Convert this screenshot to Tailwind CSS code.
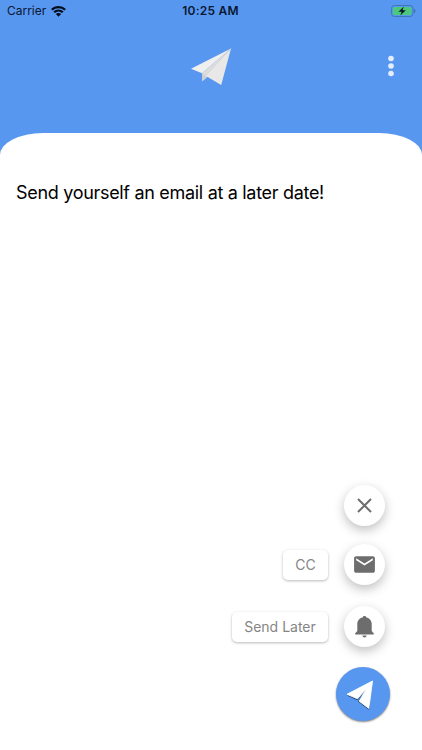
<!DOCTYPE html>
<html lang="en">
<head>
  <meta charset="UTF-8" />
  <title>Send Later</title>
  <meta name="viewport" content="width=device-width, initial-scale=1.0" />
  <script src="https://cdn.jsdelivr.net/npm/@tailwindcss/browser@4"></script>
</head>
<body class="bg-[#5897f0] font-['Inter',sans-serif] text-black">
  <div class="flex flex-col w-full h-screen overflow-hidden">

    <!-- Status bar -->
    <div class="grid grid-cols-3 items-center h-[22px] pl-[7px] pr-[6px] text-[#0a1730]">
      <div class="flex items-center gap-[5px]">
        <span class="text-[12px] leading-none tracking-[-0.02px]">Carrier</span>
        <svg class="w-[15px] h-[11px]" viewBox="0 0 15 11" fill="#040d1c">
          <path d="M7.5 0C4.6 0 2 1.1 0 3l1.6 1.600a8.400 8.400 0 0 1 11.800 0L15 3A10.800 10.800 0 0 0 7.500 0z" />
          <path d="M7.500 3.400c-2 0-3.800.8-5.100 2L4 7a5.200 5.200 0 0 1 7 0l1.600-1.600a7.400 7.400 0 0 0-5.100-2z" />
          <path d="M7.500 6.900c-1 0-1.900.4-2.600 1l2.600 2.800 2.600-2.800c-.7-.6-1.600-1-2.600-1z" />
        </svg>
      </div>
      <span class="text-center text-[12px] leading-none font-semibold tracking-[0.25px] whitespace-nowrap -ml-[2px]">10:25 AM</span>
      <svg class="justify-self-end w-[25px] h-[12px]" viewBox="0 0 25 12">
        <rect x="0.500" y="0.500" width="21.500" height="11" rx="3" fill="none" stroke="#3f76ba" />
        <rect x="2" y="2" width="18.500" height="8" rx="1.500" fill="#4cc87c" />
        <path d="M23.200 4v4c.8-.3 1.200-1.100 1.200-2s-.4-1.700-1.200-2z" fill="#3768a5" />
        <path d="M12.800 1.500 7.500 6.700h3.200L9.300 10.500l5.500-5.300h-3.300z" fill="#071425" />
      </svg>
    </div>

    <!-- Header -->
    <header class="grid grid-cols-3 items-center h-[89px] pr-[28px] mb-[22px]">
      <span></span>
      <svg class="justify-self-center w-[42px] h-[38px] ml-[28px]" viewBox="0 0 42 38">
        <path d="M41 .5 1 20.800l11 4.500z" fill="#efefef" />
        <path d="M41 .5 12 25.300l.2 8 5-4.300z" fill="#dddddd" />
        <path d="m12 25.300.2 8 5-4.300-2-1.600z" fill="#cbd0d6" />
        <path d="M41 .5 16 28 31.200 37z" fill="#e8e8e8" />
        <path d="M41 .5 15.500 27.500" fill="none" stroke="#d2d2d2" stroke-width="0.600" />
      </svg>
      <svg class="justify-self-end w-[6px] h-[22px] mb-px" viewBox="0 0 6 22" fill="#e3edfb">
        <circle cx="3" cy="3.500" r="2.800" />
        <circle cx="3" cy="11" r="2.800" />
        <circle cx="3" cy="18.500" r="2.800" />
      </svg>
    </header>

    <main class="flex flex-col grow bg-white rounded-t-[43px_22px]">
      <h1 class="mt-[48px] ml-[16px] text-[18px] leading-6 tracking-[-0.31px] whitespace-nowrap">Send yourself an email at a later date!</h1>

      <!-- Speed dial -->
      <div class="flex flex-col items-end mt-auto pr-[37px] pb-[29px]">
        <button class="grid place-items-center size-[41px] rounded-full bg-white shadow-[0_4px_11px_rgba(0,0,0,0.25)]">
          <svg class="size-[15px]" viewBox="0 0 15 15" fill="none" stroke="#6d6d6d" stroke-width="2">
            <path d="M1 1l13 13M14 1 1 14" />
          </svg>
        </button>

        <div class="flex items-start gap-4 mt-[18px]">
          <span class="grid place-items-center w-[45px] h-[30px] mt-[6px] pb-[2px] rounded-[5px] bg-white text-[14px] text-[#858585] shadow-[0_1px_3px_rgba(0,0,0,0.28)]">CC</span>
          <button class="grid place-items-center size-[41px] rounded-full bg-white shadow-[0_4px_11px_rgba(0,0,0,0.25)]">
            <svg class="size-[25px]" viewBox="0 0 24 24" fill="#6d6d6d">
              <path d="M20 4H4c-1.100 0-1.990.9-1.990 2L2 18c0 1.100.9 2 2 2h16c1.100 0 2-.9 2-2V6c0-1.100-.9-2-2-2zm0 4l-8 5-8-5V6l8 5 8-5v2z" />
            </svg>
          </button>
        </div>

        <div class="flex items-start gap-4 mt-[21px]">
          <span class="grid place-items-center w-[96px] h-[30px] mt-[6px] pb-[2px] rounded-[5px] bg-white text-[14px] text-[#858585] whitespace-nowrap shadow-[0_1px_3px_rgba(0,0,0,0.28)]">Send Later</span>
          <button class="grid place-items-center size-[41px] pt-px rounded-full bg-white shadow-[0_4px_11px_rgba(0,0,0,0.25)]">
            <svg class="w-[19px] h-[22px]" viewBox="0 0 19 22" fill="#6d6d6d">
              <path d="M9.500 0C8.500 0 7.700.6 7.600 1.500 4.400 2.200 2.300 4.700 2.300 8v6.300c0 1-.5 1.700-1.900 2.700-.4.300-.4 1.500.3 1.500h17.600c.7 0 .7-1.200.3-1.500-1.400-1-1.900-1.700-1.900-2.700V8c0-3.300-2.100-5.800-5.300-6.500C11.300.6 10.500 0 9.500 0zM7.300 19.500c.2 1.200 1.100 2 2.200 2s2-.8 2.200-2z" />
            </svg>
          </button>
        </div>

        <button class="grid place-items-center size-[54px] mt-[20px] -mr-[5px] rounded-full bg-[#5897f0] shadow-[0_1px_2px_rgba(0,0,0,0.5)]">
          <svg class="w-[28px] h-[30px] mr-[7px] mt-px" viewBox="0 0 28 30">
            <g fill="#1f3c69">
              <path d="M1 15.500 11.300 20.200 20 9.500z" />
              <path d="M20.500 8 12 21.500 22.800 29.700 24 26z" />
            </g>
            <path d="M26.500 1 1 14.300l10.400 4.500L20.500 8.500 13.200 21.200l9.600 7.200z" fill="#fff" stroke="#fff" stroke-width="0.900" stroke-linejoin="round" />
          </svg>
        </button>
      </div>
    </main>
  </div>
</body>
</html>
